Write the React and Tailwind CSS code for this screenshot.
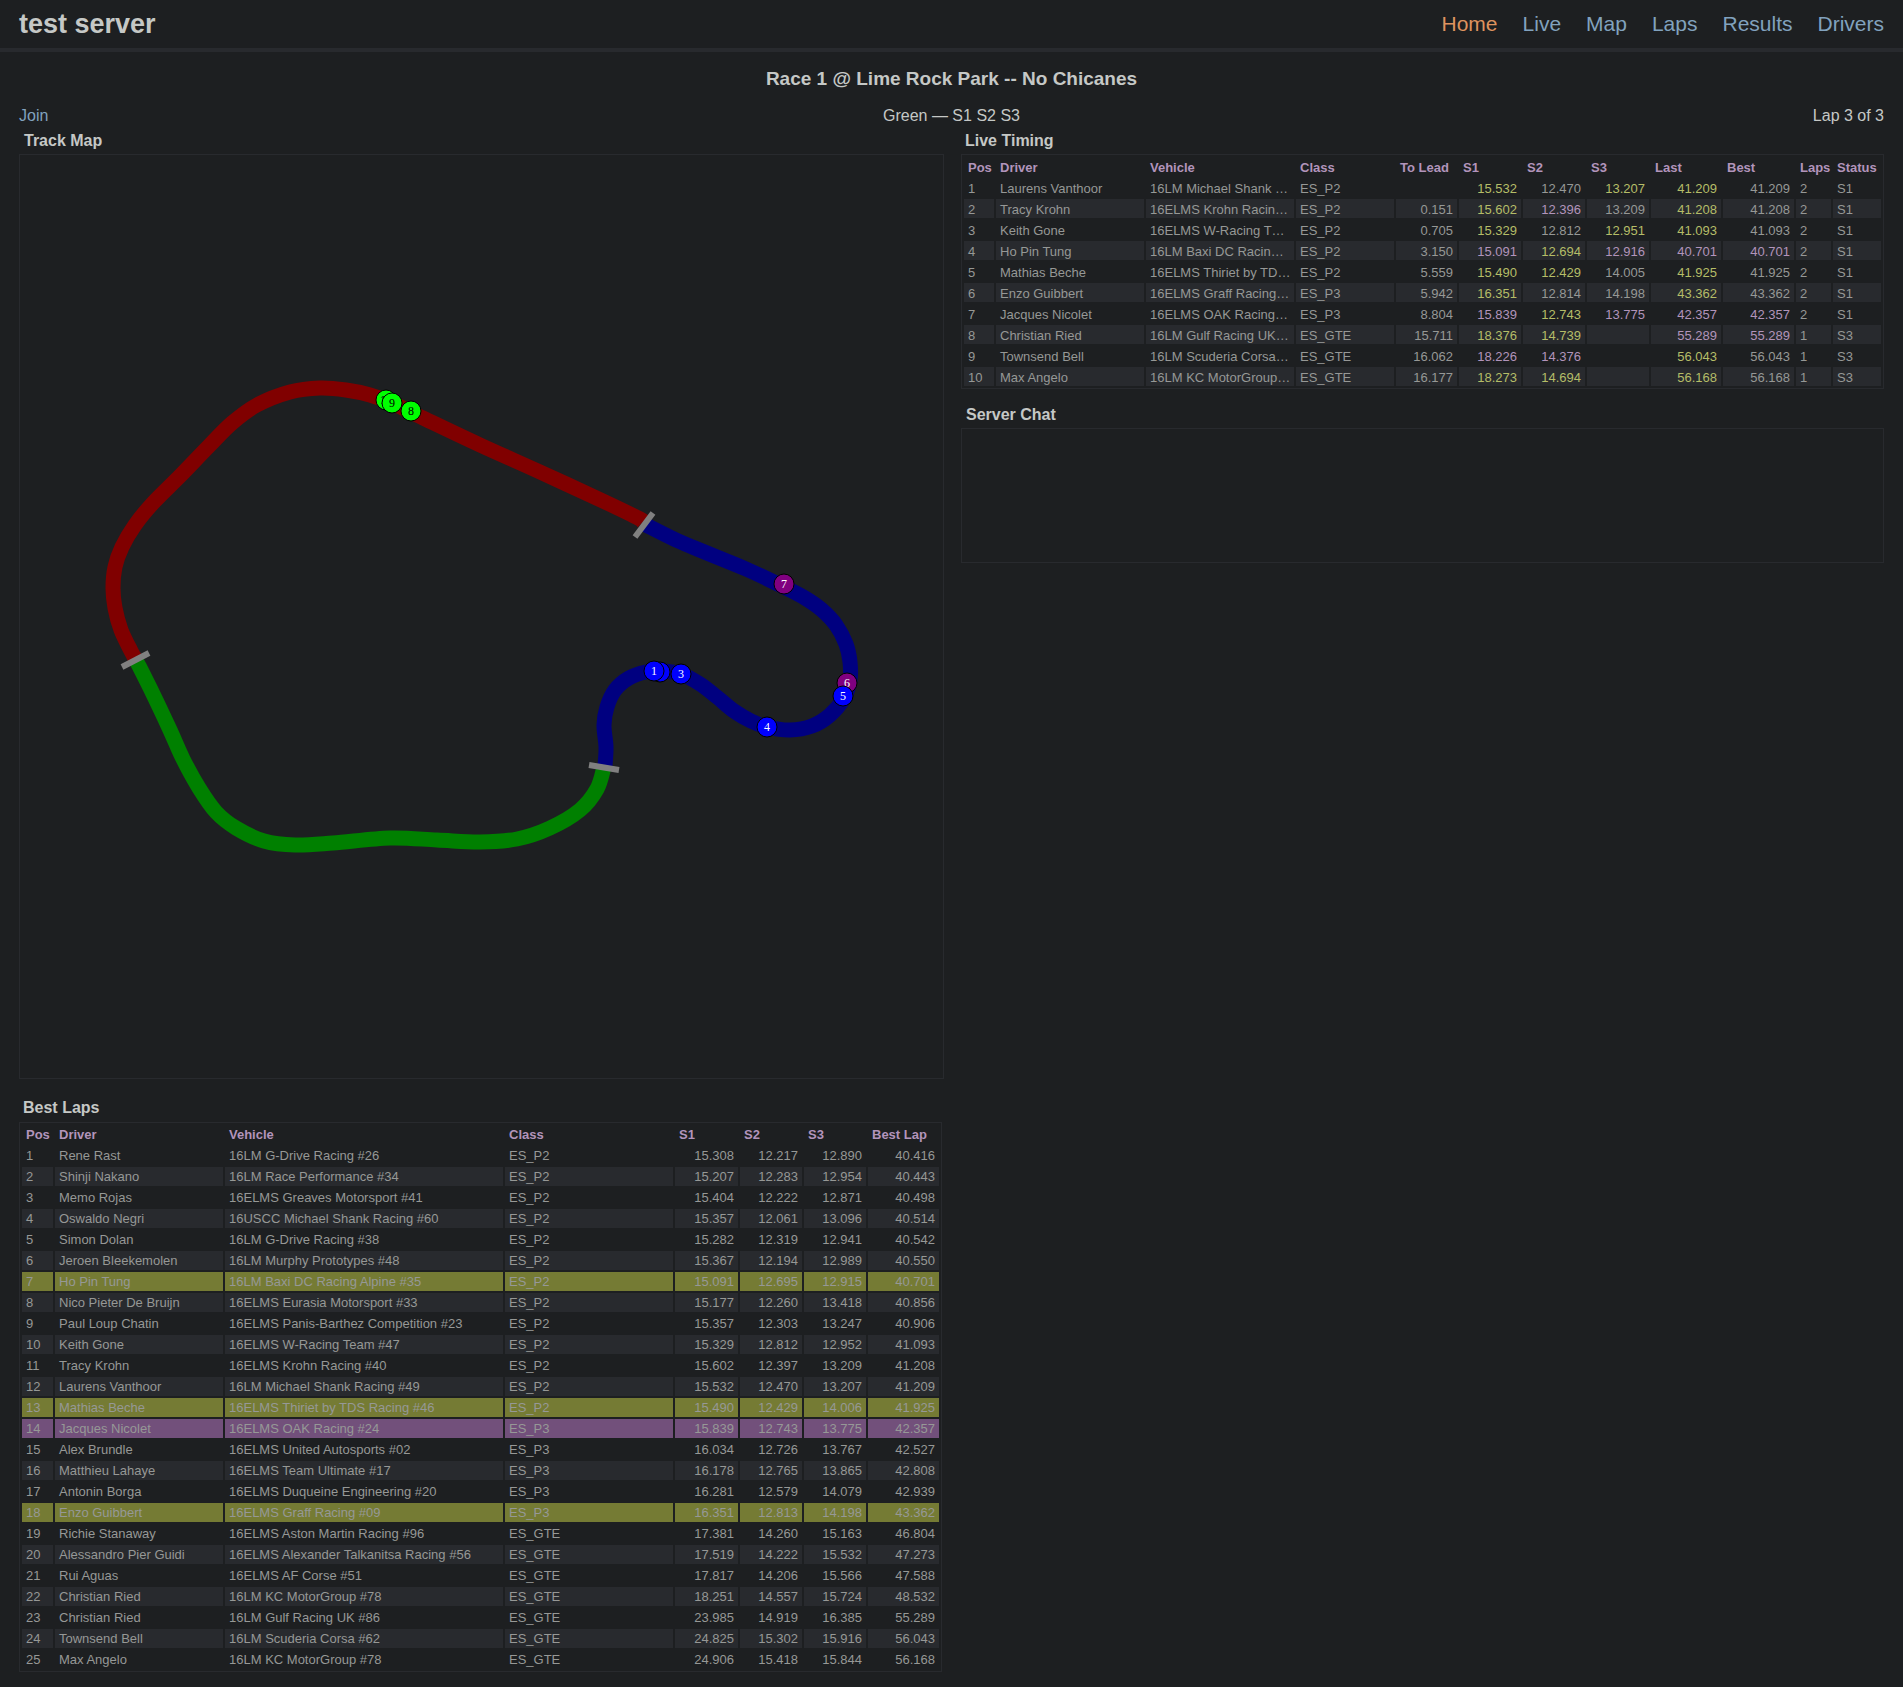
import React from 'react';

const NAV = ['Home', 'Live', 'Map', 'Laps', 'Results', 'Drivers'];

const SECTORS = [
  {
    color: '#800000',
    points: [
      [643, 522], [640, 519], [605, 502], [540, 472], [480, 445], [423, 418], [392, 403], [370, 395], [346, 390],
      [320, 388], [290, 392], [257, 405], [232, 423], [208, 447], [180, 476], [153, 503], [135, 525], [122, 547],
      [115, 567], [113, 588], [115, 608], [121, 630], [131, 651], [136, 660],
    ],
  },
  {
    color: '#008000',
    points: [
      [136, 660], [153, 694], [170, 730], [183, 759], [199, 788], [216, 812], [236, 828], [264, 841], [295, 845],
      [333, 843], [390, 838], [437, 840], [480, 842], [517, 839], [550, 828], [580, 810], [597, 789], [604, 767],
    ],
  },
  {
    color: '#000080',
    points: [
      [644, 524], [676, 540], [707, 553], [746, 569], [784, 587], [805, 598], [822, 610], [836, 625], [846, 644],
      [850, 662], [850, 680], [844, 698], [830, 715], [812, 726], [790, 730], [767, 727], [751, 721], [734, 711],
      [717, 697], [700, 684], [681, 674], [662, 671], [646, 672], [629, 678], [615, 690], [607, 707], [604, 725],
      [606, 747], [605, 766],
    ],
  },
];

const GATES = [
  [635, 537, 653, 513],
  [122, 667, 149, 653],
  [589, 765, 619, 770],
];

const CARS = [
  { n: 10, x: 386, y: 400, fill: '#00ff00', ink: '#000000' },
  { n: 9, x: 392, y: 403, fill: '#00ff00', ink: '#000000' },
  { n: 8, x: 411, y: 411, fill: '#00ff00', ink: '#000000' },
  { n: 7, x: 784, y: 584, fill: '#800080', ink: '#ffffff' },
  { n: 6, x: 847, y: 683, fill: '#800080', ink: '#ffffff' },
  { n: 5, x: 843, y: 696, fill: '#0000ff', ink: '#ffffff' },
  { n: 4, x: 767, y: 727, fill: '#0000ff', ink: '#ffffff' },
  { n: 3, x: 681, y: 674, fill: '#0000ff', ink: '#ffffff' },
  { n: 2, x: 660, y: 672, fill: '#0000ff', ink: '#ffffff' },
  { n: 1, x: 654, y: 671, fill: '#0000ff', ink: '#ffffff' },
];

// Catmull-Rom spline through the surveyed points, as cubic segments.
function spline(p) {
  let d = `M${p[0][0]} ${p[0][1]}`;
  for (let i = 0; i < p.length - 1; i++) {
    const a = p[i - 1] || p[i];
    const b = p[i];
    const c = p[i + 1];
    const e = p[i + 2] || c;
    d += `C${b[0] + (c[0] - a[0]) / 6} ${b[1] + (c[1] - a[1]) / 6} ${c[0] - (e[0] - b[0]) / 6} ${c[1] - (e[1] - b[1]) / 6} ${c[0]} ${c[1]}`;
  }
  return d;
}

function TrackMap() {
  return (
    <svg viewBox="20 155 923 923" className="block w-full" role="img" aria-label="Track map">
      {SECTORS.map((s) => (
        <path key={s.color} d={spline(s.points)} fill="none" stroke={s.color} strokeWidth="15" />
      ))}
      {GATES.map((g) => (
        <line key={g[0]} x1={g[0]} y1={g[1]} x2={g[2]} y2={g[3]} stroke="#808080" strokeWidth="6" />
      ))}
      {CARS.map((c) => (
        <g key={c.n}>
          <circle cx={c.x} cy={c.y} r="10" fill={c.fill} stroke="#000000" />
          <text x={c.x} y={c.y + 4} fill={c.ink} textAnchor="middle" className="font-['Liberation_Serif',serif] text-[12px]">
            {c.n}
          </text>
        </g>
      ))}
    </svg>
  );
}

// Time colours: y = personal best, p = class best, g = no improvement.
const TONES = { y: 'text-[#b5bd68]', p: 'text-[#b294bb]', g: '' };

const LIVE_COLS = [
  ['Pos', 'w-[30px]'], ['Driver', 'w-[148px]'], ['Vehicle', 'w-[148px]'], ['Class', 'w-[98px]'],
  ['To Lead', 'w-[61px]'], ['S1', 'w-[62px]'], ['S2', 'w-[62px]'], ['S3', 'w-[62px]'],
  ['Last', 'w-[70px]'], ['Best', 'w-[71px]'], ['Laps', 'w-[35px]'], ['Status', 'w-[48px]'],
];

const LIVE = [
  ['Laurens Vanthoor', '16LM Michael Shank …', 'ES_P2', '', '15.532', '12.470', '13.207', '41.209', '41.209', 2, 'S1', 'ygyyg'],
  ['Tracy Krohn', '16ELMS Krohn Racin…', 'ES_P2', '0.151', '15.602', '12.396', '13.209', '41.208', '41.208', 2, 'S1', 'ypgyg'],
  ['Keith Gone', '16ELMS W-Racing T…', 'ES_P2', '0.705', '15.329', '12.812', '12.951', '41.093', '41.093', 2, 'S1', 'ygyyg'],
  ['Ho Pin Tung', '16LM Baxi DC Racin…', 'ES_P2', '3.150', '15.091', '12.694', '12.916', '40.701', '40.701', 2, 'S1', 'pyppp'],
  ['Mathias Beche', '16ELMS Thiriet by TD…', 'ES_P2', '5.559', '15.490', '12.429', '14.005', '41.925', '41.925', 2, 'S1', 'yygyg'],
  ['Enzo Guibbert', '16ELMS Graff Racing…', 'ES_P3', '5.942', '16.351', '12.814', '14.198', '43.362', '43.362', 2, 'S1', 'yggyg'],
  ['Jacques Nicolet', '16ELMS OAK Racing…', 'ES_P3', '8.804', '15.839', '12.743', '13.775', '42.357', '42.357', 2, 'S1', 'pyppp'],
  ['Christian Ried', '16LM Gulf Racing UK…', 'ES_GTE', '15.711', '18.376', '14.739', '', '55.289', '55.289', 1, 'S3', 'yygpp'],
  ['Townsend Bell', '16LM Scuderia Corsa…', 'ES_GTE', '16.062', '18.226', '14.376', '', '56.043', '56.043', 1, 'S3', 'ppgyg'],
  ['Max Angelo', '16LM KC MotorGroup…', 'ES_GTE', '16.177', '18.273', '14.694', '', '56.168', '56.168', 1, 'S3', 'yygyg'],
];

const BEST_COLS = [
  ['Pos', 'w-[31px]'], ['Driver', 'w-[168px]'], ['Vehicle', 'w-[278px]'], ['Class', 'w-[168px]'],
  ['S1', 'w-[63px]'], ['S2', 'w-[62px]'], ['S3', 'w-[62px]'], ['Best Lap', 'w-[71px]'],
];

const BEST = [
  ['Rene Rast', '16LM G-Drive Racing #26', 'ES_P2', '15.308', '12.217', '12.890', '40.416'],
  ['Shinji Nakano', '16LM Race Performance #34', 'ES_P2', '15.207', '12.283', '12.954', '40.443'],
  ['Memo Rojas', '16ELMS Greaves Motorsport #41', 'ES_P2', '15.404', '12.222', '12.871', '40.498'],
  ['Oswaldo Negri', '16USCC Michael Shank Racing #60', 'ES_P2', '15.357', '12.061', '13.096', '40.514'],
  ['Simon Dolan', '16LM G-Drive Racing #38', 'ES_P2', '15.282', '12.319', '12.941', '40.542'],
  ['Jeroen Bleekemolen', '16LM Murphy Prototypes #48', 'ES_P2', '15.367', '12.194', '12.989', '40.550'],
  ['Ho Pin Tung', '16LM Baxi DC Racing Alpine #35', 'ES_P2', '15.091', '12.695', '12.915', '40.701', 'y'],
  ['Nico Pieter De Bruijn', '16ELMS Eurasia Motorsport #33', 'ES_P2', '15.177', '12.260', '13.418', '40.856'],
  ['Paul Loup Chatin', '16ELMS Panis-Barthez Competition #23', 'ES_P2', '15.357', '12.303', '13.247', '40.906'],
  ['Keith Gone', '16ELMS W-Racing Team #47', 'ES_P2', '15.329', '12.812', '12.952', '41.093'],
  ['Tracy Krohn', '16ELMS Krohn Racing #40', 'ES_P2', '15.602', '12.397', '13.209', '41.208'],
  ['Laurens Vanthoor', '16LM Michael Shank Racing #49', 'ES_P2', '15.532', '12.470', '13.207', '41.209'],
  ['Mathias Beche', '16ELMS Thiriet by TDS Racing #46', 'ES_P2', '15.490', '12.429', '14.006', '41.925', 'y'],
  ['Jacques Nicolet', '16ELMS OAK Racing #24', 'ES_P3', '15.839', '12.743', '13.775', '42.357', 'p'],
  ['Alex Brundle', '16ELMS United Autosports #02', 'ES_P3', '16.034', '12.726', '13.767', '42.527'],
  ['Matthieu Lahaye', '16ELMS Team Ultimate #17', 'ES_P3', '16.178', '12.765', '13.865', '42.808'],
  ['Antonin Borga', '16ELMS Duqueine Engineering #20', 'ES_P3', '16.281', '12.579', '14.079', '42.939'],
  ['Enzo Guibbert', '16ELMS Graff Racing #09', 'ES_P3', '16.351', '12.813', '14.198', '43.362', 'y'],
  ['Richie Stanaway', '16ELMS Aston Martin Racing #96', 'ES_GTE', '17.381', '14.260', '15.163', '46.804'],
  ['Alessandro Pier Guidi', '16ELMS Alexander Talkanitsa Racing #56', 'ES_GTE', '17.519', '14.222', '15.532', '47.273'],
  ['Rui Aguas', '16ELMS AF Corse #51', 'ES_GTE', '17.817', '14.206', '15.566', '47.588'],
  ['Christian Ried', '16LM KC MotorGroup #78', 'ES_GTE', '18.251', '14.557', '15.724', '48.532'],
  ['Christian Ried', '16LM Gulf Racing UK #86', 'ES_GTE', '23.985', '14.919', '16.385', '55.289'],
  ['Townsend Bell', '16LM Scuderia Corsa #62', 'ES_GTE', '24.825', '15.302', '15.916', '56.043'],
  ['Max Angelo', '16LM KC MotorGroup #78', 'ES_GTE', '24.906', '15.418', '15.844', '56.168'],
];

function rowTone(mark, i) {
  if (mark === 'y') return 'bg-[#757b34]';
  if (mark === 'p') return 'bg-[#72507b]';
  return i % 2 ? 'bg-[#282a2e]' : '';
}

function TimingTable({ cols, labelledBy, cellPadding, children }) {
  return (
    <table
      aria-labelledby={labelledBy}
      className={`w-full table-fixed border-separate border-spacing-[2px] border border-[#282a2e] text-[13px] leading-[17px] whitespace-nowrap text-[#969896] ${cellPadding}`}
    >
      <thead>
        <tr>
          {cols.map(([label, width]) => (
            <th key={label} scope="col" className={`${width} px-1 text-left font-bold text-[#b294bb]`}>
              {label}
            </th>
          ))}
        </tr>
      </thead>
      <tbody>{children}</tbody>
    </table>
  );
}

function Cell({ tone, right, color = '', children }) {
  return <td className={`h-[19px] px-1 ${tone} ${color} ${right ? 'text-right' : ''}`}>{children}</td>;
}

export default function App() {
  return (
    <div className="min-h-screen bg-[#1d1f21] pb-[15px] font-['Liberation_Sans',Arial,sans-serif] text-[16px] text-[#c5c8c6]">
      <header className="flex h-[52px] items-center justify-between border-b-4 border-[#282a2e] px-[19px]">
        <h1 className="text-[27px] font-bold">test server</h1>
        <nav className="flex gap-[25px] text-[21px]">
          {NAV.map((item, i) => (
            <a key={item} href={`#${item.toLowerCase()}`} className={i === 0 ? 'text-[#de935f]' : 'text-[#81a2be]'}>
              {item}
            </a>
          ))}
        </nav>
      </header>

      <main className="px-[19px] pt-[15px]">
        <h2 className="text-center text-[19px] font-bold leading-[24px]">Race 1 @ Lime Rock Park -- No Chicanes</h2>
        <div className="mt-[13px] grid grid-cols-3 leading-[24px]">
          <div>
            <a href="#join" className="text-[#81a2be]">Join</a>
          </div>
          <p className="text-center">Green — S1 S2 S3</p>
          <p className="text-right">Lap 3 of 3</p>
        </div>

        <div className="grid grid-cols-[minmax(0,925fr)_minmax(0,923fr)] items-start gap-[17px]">
          <div>
            <section>
              <h3 className="pl-[5px] font-bold leading-[26px]">Track Map</h3>
              <div className="border border-[#282a2e]">
                <TrackMap />
              </div>
            </section>
            <section className="mt-[14px] pr-[2px]">
              <h3 id="best-laps" className="pl-1 font-bold leading-[29px]">Best Laps</h3>
              <TimingTable
                cols={BEST_COLS}
                labelledBy="best-laps"
                cellPadding="[&_td]:py-px [&_th]:py-px"
              >
                {BEST.map(([driver, vehicle, cls, s1, s2, s3, best, mark], i) => {
                  const tone = rowTone(mark, i);
                  return (
                    <tr key={i}>
                      <Cell tone={tone}>{i + 1}</Cell>
                      <Cell tone={tone}>{driver}</Cell>
                      <Cell tone={tone}>{vehicle}</Cell>
                      <Cell tone={tone}>{cls}</Cell>
                      <Cell tone={tone} right>{s1}</Cell>
                      <Cell tone={tone} right>{s2}</Cell>
                      <Cell tone={tone} right>{s3}</Cell>
                      <Cell tone={tone} right>{best}</Cell>
                    </tr>
                  );
                })}
              </TimingTable>
            </section>
          </div>

          <div>
            <section>
              <h3 id="live-timing" className="pl-1 font-bold leading-[26px]">Live Timing</h3>
              <TimingTable
                cols={LIVE_COLS}
                labelledBy="live-timing"
                cellPadding="[&_td]:pt-[2px] [&_td]:pb-0 [&_th]:pt-[2px] [&_th]:pb-0"
              >
                {LIVE.map(([driver, vehicle, cls, lead, s1, s2, s3, last, best, laps, status, marks], i) => {
                  const tone = rowTone('', i);
                  return (
                    <tr key={driver}>
                      <Cell tone={tone}>{i + 1}</Cell>
                      <Cell tone={tone}>{driver}</Cell>
                      <Cell tone={tone}>{vehicle}</Cell>
                      <Cell tone={tone}>{cls}</Cell>
                      <Cell tone={tone} right>{lead}</Cell>
                      {[s1, s2, s3, last, best].map((time, k) => (
                        <Cell key={k} tone={tone} right color={TONES[marks[k]]}>{time}</Cell>
                      ))}
                      <Cell tone={tone}>{laps}</Cell>
                      <Cell tone={tone}>{status}</Cell>
                    </tr>
                  );
                })}
              </TimingTable>
            </section>
            <section className="mt-[13px]">
              <h3 className="pl-[5px] font-bold leading-[26px]">Server Chat</h3>
              <div className="h-[135px] border border-[#282a2e]" />
            </section>
          </div>
        </div>
      </main>
    </div>
  );
}
